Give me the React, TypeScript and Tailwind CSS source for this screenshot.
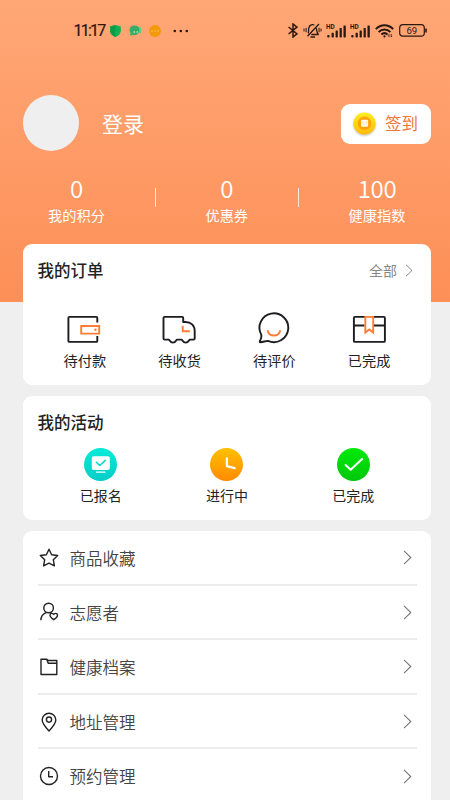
import type { ReactNode } from 'react';

function SignalIcon({ className }: { className?: string }) {
  return (
    <svg className={className} width="21" height="16" viewBox="0 0 21 16" fill="#2a1710">
      <text x="0" y="5.6" fontSize="6.4" fontWeight="700" fontFamily="Roboto, sans-serif">
        HD
      </text>
      <rect x="1.2" y="12" width="2.4" height="2.4" rx="1" />
      <rect x="5.6" y="9.8" width="2.2" height="4.6" rx=".6" />
      <rect x="9.6" y="7.4" width="2.2" height="7" rx=".6" />
      <rect x="13.6" y="5" width="2.2" height="9.4" rx=".6" />
      <rect x="17.5" y="2.4" width="2.3" height="12" rx=".6" />
    </svg>
  );
}

function StatusBar() {
  return (
    <div className="flex h-[61px] items-center pl-[73.5px] text-[#2a1710]">
      <span className="w-[34.5px] font-[Roboto,sans-serif] text-[16px] leading-[24px] tracking-[-1.8px] whitespace-nowrap [-webkit-text-stroke:0.2px]">
        11:17
      </span>
      <svg className="ml-[1.5px]" width="11" height="12" viewBox="0 0 11 12">
        <path d="M5.5 0 10.8 1.5V6c0 3-2.4 5-5.3 6C2.6 11 .2 9 .2 6V1.5z" fill="#0eb254" />
        <path d="M5.5 0v12C2.6 11 .2 9 .2 6V1.5z" fill="#0a9c48" />
      </svg>
      <svg className="ml-[8px]" width="13" height="11" viewBox="0 0 13 11">
        <path d="M8 2.2C11 1 12.8 3 12.3 5.3c-.1 1-.4 1.7-.1 3.2L9 8z" fill="#63cf82" />
        <path d="M5.4.6c3.2 0 5 2 5 4.6s-2 4.8-5 4.8L.8 10.4l.8-2.2C-.8 5 1 .6 5.4.6z" fill="#35ad67" />
        <circle cx="5.3" cy="7" r=".8" fill="#d6ffe4" />
        <circle cx="8.2" cy="7" r=".8" fill="#d6ffe4" />
      </svg>
      <svg className="ml-[7px]" width="12" height="12" viewBox="0 0 12 12">
        <circle cx="6" cy="6" r="6" fill="#f39a0b" />
        <g fill="#ffc565">
          <circle cx="3" cy="6" r=".8" />
          <circle cx="6" cy="6" r=".8" />
          <circle cx="9" cy="6" r=".8" />
        </g>
      </svg>
      <svg className="ml-[12.5px]" width="16" height="4" viewBox="0 0 16 4" fill="currentColor">
        <circle cx="1.8" cy="2" r="1.3" />
        <circle cx="7.8" cy="2" r="1.3" />
        <circle cx="13.8" cy="2" r="1.3" />
      </svg>
      <svg className="ml-[99px]" width="10" height="15" viewBox="0 0 10 15" fill="none" stroke="currentColor" strokeWidth="1.5">
        <path d="M.6 4 9 10.8 5 14V1l4 3.2L.6 11" />
      </svg>
      <svg className="ml-[5px]" width="19" height="15" viewBox="0 0 19 15" fill="none" stroke="currentColor" strokeWidth="1.3">
        <path d="M16 1 4.5 13.2M5.1 10.3C6 9 5.3 7 5.8 5 6.4 2.2 8.6 1 11.4 2M13.4 5.2c.6 2.4-.1 4 1.7 5.6v.7H8.3M7.5 14h4.5" />
        <path d="M3.1 4.8v4.4M1 5.5v3M16.1 4.8v4.4M18 5.5v3" strokeWidth="1" />
      </svg>
      <SignalIcon className="ml-[4px]" />
      <SignalIcon className="ml-[3px]" />
      <svg className="ml-[4px]" width="19" height="14" viewBox="0 0 19 14" fill="none" stroke="currentColor" strokeWidth="2">
        <path d="M.8 5.1C5.8-.1 13.2-.1 18.2 5.1M3.6 8c3.4-3.4 8.4-3.4 11.8 0M6.4 10.6c1.8-1.7 4.4-1.7 6.2 0" />
        <circle cx="9.5" cy="12.4" r="1.1" fill="currentColor" stroke="none" />
        <path d="M14 13.2v-2.7l-1 1M16.2 10v2.9l1-1" strokeWidth=".8" />
      </svg>
      <svg className="ml-[4.5px]" width="29" height="13" viewBox="0 0 29 13">
        <rect x=".7" y=".7" width="24.6" height="11.4" rx="3.2" fill="none" stroke="currentColor" strokeWidth="1.2" />
        <path d="M27 4.5v4" stroke="currentColor" strokeWidth="1.6" />
        <text x="12.8" y="9.8" fontSize="9.6" textAnchor="middle" fontFamily="Roboto, sans-serif" fill="currentColor">
          69
        </text>
      </svg>
    </div>
  );
}

function CoinIcon() {
  return (
    <svg className="drop-shadow-[0_1px_1px_#0004]" width="23" height="23" viewBox="0 0 23 23">
      <defs>
        <linearGradient id="coin" x1="0" y1="0" x2="0" y2="1">
          <stop offset="0" stopColor="#fff01e" />
          <stop offset="1" stopColor="#ffba08" />
        </linearGradient>
      </defs>
      <circle cx="11.5" cy="11.5" r="11" fill="url(#coin)" />
      <circle cx="11.5" cy="11.2" r="6.8" fill="#ffa30a" />
      <rect x="8.1" y="7.8" width="7" height="7" rx=".8" fill="#fff9e8" />
      <path d="M9.3 10.3h2M9.3 12.4h2M13.2 9v3.4" stroke="#ffd28a" strokeWidth=".6" />
    </svg>
  );
}

function Stat({ value, label, className }: { value: string; label: string; className: string }) {
  return (
    <div className={`flex flex-col items-center ${className}`}>
      <span className="text-[24px] leading-[28px] font-[350] tracking-[-0.3px]">{value}</span>
      <span className="mt-[1px] text-[14.2px] leading-[24px]">{label}</span>
    </div>
  );
}

function Chevron({ className }: { className?: string }) {
  return (
    <svg className={className} width="9" height="15" viewBox="0 0 9 15" fill="none" stroke="#777" strokeWidth="1.1">
      <path d="M1 .8 7.8 7.5 1 14.2" />
    </svg>
  );
}

function OrderIcon({ children }: { children: ReactNode }) {
  return (
    <svg className="-ml-px" width="36" height="32" viewBox="0 0 36 32" fill="none" stroke="#1c1d20" strokeWidth="1.9" strokeLinejoin="round">
      {children}
    </svg>
  );
}

const orders = [
  {
    label: '待付款',
    icon: (
      <OrderIcon>
        <path d="M31.3 10.5V5.9q0-1-1-1H3.4q-1 0-1 1v23q0 1 1 1h26.9q1 0 1-1v-5" />
        <path d="M15.2 14h18v7.6h-18z" stroke="#ff7d35" strokeLinejoin="miter" />
        <circle cx="29.4" cy="17.7" r="1.2" fill="#ff7d35" stroke="none" />
      </OrderIcon>
    ),
  },
  {
    label: '待收货',
    icon: (
      <OrderIcon>
        <path d="M22.2 10V5.9q0-1-1-1H3.5q-1 0-1 1v20.5q0 1.2 1.2 1.2h4.1c.8 0 1.2 3 4.1 3s3.3-3 4.1-3h4.6c.8 0 1.2 3 4.1 3s3.3-3 4.1-3h3.7q1.2 0 1.2-1.2v-7.2C33.7 13.3 30 10 24.4 10z" />
        <path d="M21.7 13.8v5.5h7.2" stroke="#ff7d35" strokeLinejoin="miter" />
      </OrderIcon>
    ),
  },
  {
    label: '待评价',
    icon: (
      <OrderIcon>
        <path d="M5.2 22.6A14.4 14.4 0 1 1 12 28.9c-2.6.2-4.9 1.1-7.6 1.3-.8 0-.7-.6-.4-1.2.9-2.3 1.9-4 1.2-6.4z" />
        <path d="M11.5 18.2c1.4 7.1 11.4 7.1 12.8 0" stroke="#ff7d35" />
      </OrderIcon>
    ),
  },
  {
    label: '已完成',
    icon: (
      <OrderIcon>
        <rect x="2.9" y="4.9" width="31" height="25" rx="1" />
        <path d="M3 13.5h10.5M23 13.5h11" />
        <path d="M14.3 4.9h7.9v15.7l-3.9-3.1-4 3.1z" fill="#fff" stroke="#ff7d35" strokeLinejoin="miter" />
      </OrderIcon>
    ),
  },
];

const activities = [
  {
    label: '已报名',
    color: 'from-[#08ead8] to-[#05cdc8]',
    icon: (
      <>
        <rect x="7.8" y="8.3" width="18" height="13.8" rx="2" fill="#fff" stroke="none" />
        <path d="m12.4 14.3 3.3 3.2 5.6-5.2" stroke="#08d9cc" strokeWidth="1.6" />
        <path d="M12.5 24.1h8.5" strokeWidth="1.3" />
      </>
    ),
  },
  {
    label: '进行中',
    color: 'from-[#ffc000] to-[#ff8a00]',
    icon: <path d="M16.9 10.5v7.7l7.7 2" strokeWidth="2.3" />,
  },
  {
    label: '已完成',
    color: 'from-[#00ea08] to-[#00c80d]',
    icon: <path d="m8.6 16.9 5 4.8 11.5-10.8" strokeWidth="2.1" />,
  },
];

const menu = [
  {
    label: '商品收藏',
    icon: <path d="m10 1.2 2.6 5.5 6.1.8-4.4 4.2 1.1 6.2-5.4-2.8-5.4 2.8 1.1-6.2L1.3 7.5l6.1-.8z" />,
  },
  {
    label: '志愿者',
    icon: (
      <>
        <circle cx="9.6" cy="6" r="4.8" />
        <path d="M1.9 18.2c0-3.4 2.1-6.1 5-7.5M14.7 17.7c-2.2-1.5-3.7-2.7-3.7-4.4 0-2.2 2.7-2.6 3.7-.8 1-1.8 3.8-1.4 3.8.8 0 1.7-1.5 2.9-3.8 4.4z" />
      </>
    ),
  },
  {
    label: '健康档案',
    icon: <path d="M2 2.2h5.8l1.6 1.3h8.4v14H2zM7.7 2.2l1.5 4h8.6" />,
  },
  {
    label: '地址管理',
    icon: (
      <>
        <path d="M10 19C7.2 16 3.2 11.7 3.2 8a6.8 6.8 0 0 1 13.6 0c0 3.7-4 8-6.8 11z" />
        <circle cx="10" cy="7.6" r="2.6" />
      </>
    ),
  },
  {
    label: '预约管理',
    icon: (
      <>
        <circle cx="10" cy="10" r="8.5" />
        <path d="M9.7 5v5.7H14" />
      </>
    ),
  },
];

export default function App() {
  return (
    <div className="h-[800px] w-[450px] overflow-hidden bg-[#efefef] font-['Noto_Sans_CJK_SC',sans-serif] text-[#222]">
      <header className="h-[302px] bg-linear-to-b from-[#ffa776] to-[#fd8f57] text-white">
        <StatusBar />
        <div className="mt-[34px] flex h-[56px] items-center pl-[23px]">
          <div className="h-[56px] w-[56px] rounded-full bg-[#efefef]" />
          <span className="ml-[23px] text-[21px] leading-[30px]">登录</span>
          <button className="mt-px ml-[197px] flex h-[40px] w-[90px] items-center rounded-[9px] bg-white pl-[12px] text-[16.5px] text-[#ef7838]">
            <CoinIcon />
            <span className="ml-[9px] whitespace-nowrap">签到</span>
          </button>
        </div>
        <div className="mt-[23px] flex">
          <Stat value="0" label="我的积分" className="w-[154.5px] pr-[1.5px]" />
          <i className="mt-[14px] h-[19px] w-px bg-white/80" />
          <Stat value="0" label="优惠券" className="w-[142.5px]" />
          <i className="mt-[14px] h-[19px] w-px bg-white/80" />
          <Stat value="100" label="健康指数" className="w-[151px] pl-[5px]" />
        </div>
      </header>

      <main className="-mt-[58px] ml-[23px] w-[408px]">
        <section className="relative h-[141px] rounded-[9px] bg-white px-[14.5px] pt-[14px]">
          <div className="flex h-[25px] items-center justify-between">
            <h2 className="text-[16.5px] font-medium">我的订单</h2>
            <span className="flex items-center pr-[3.5px] text-[14px] text-[#888]">
              全部
              <svg className="ml-[8px]" width="8" height="13" viewBox="0 0 8 13" fill="none" stroke="#888">
                <path d="m1 .8 6 5.7-6 5.7" />
              </svg>
            </span>
          </div>
          <div className="mt-[29px] grid grid-cols-4">
            {orders.map((o) => (
              <div key={o.label} className="flex flex-col items-center">
                {o.icon}
                <span className="mt-[4px] text-[14.2px] leading-[24px]">{o.label}</span>
              </div>
            ))}
          </div>
        </section>

        <section className="mt-[10.5px] h-[124.5px] rounded-[9px] bg-white px-[14.5px] pt-[14px]">
          <h2 className="text-[16.5px] leading-[25px] font-medium">我的活动</h2>
          <div className="mt-[13px] grid grid-cols-3">
            {activities.map((a) => (
              <div key={a.label} className="flex flex-col items-center">
                <div className={`h-[33px] w-[33px] rounded-full bg-linear-to-b ${a.color}`}>
                  <svg width="33" height="33" viewBox="0 0 33 33" fill="none" stroke="#fff" strokeLinecap="round" strokeLinejoin="round">
                    {a.icon}
                  </svg>
                </div>
                <span className="mt-[2px] text-[14px] leading-[24px]">{a.label}</span>
              </div>
            ))}
          </div>
        </section>

        <section className="mt-[11px] rounded-t-[9px] bg-white px-[14.5px]">
          {menu.map((m) => (
            <div key={m.label} className="flex h-[54.6px] items-center border-b-2 border-[#ececec] pt-[1px] pl-[1.5px]">
              <svg width="20" height="20" viewBox="0 0 20 20" fill="none" stroke="#222" strokeWidth="1.4" strokeLinejoin="round">
                {m.icon}
              </svg>
              <span className="ml-[10.5px] pt-[1px] text-[16.5px] font-[350] text-[#444]">{m.label}</span>
              <Chevron className="mr-[4.5px] ml-auto" />
            </div>
          ))}
        </section>
      </main>
    </div>
  );
}
